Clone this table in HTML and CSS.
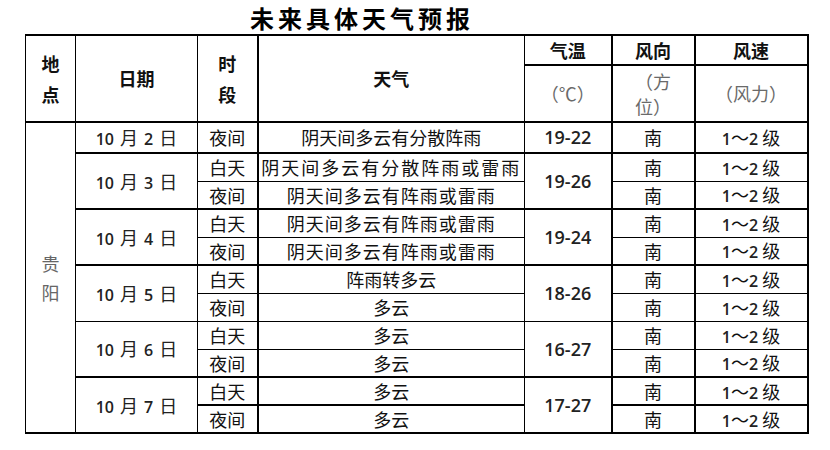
FILE: index.html
```html
<!DOCTYPE html>
<html lang="zh-CN">
<head>
<meta charset="utf-8">
<title>未来具体天气预报</title>
<link rel="stylesheet" href="styles.css">
</head>
<body>
<div class="page">
  <h1 class="title">未来具体天气预报</h1>
  <table class="forecast">
    <colgroup>
      <col class="w-loc"><col class="w-date"><col class="w-slot"><col class="w-wx"><col class="w-temp"><col class="w-dir"><col class="w-spd">
    </colgroup>
    <thead>
      <tr class="h1">
        <th rowspan="2">地<br>点</th>
        <th rowspan="2">日期</th>
        <th rowspan="2">时<br>段</th>
        <th rowspan="2" class="wx">天气</th>
        <th>气温</th>
        <th class="dir">风向</th>
        <th>风速</th>
      </tr>
      <tr class="h2">
        <td class="unit">（℃）</td>
        <td class="unit dir"><span class="unit-line">（方</span><span class="unit-line">位）</span></td>
        <td class="unit">（风力）</td>
      </tr>
    </thead>
    <tbody>
      <tr class="r-first tt">
        <td rowspan="12" class="loc"><span class="loc-ch">贵</span><span class="loc-ch">阳</span></td>
        <td class="date"><span class="num">10</span> 月 <span class="num">2</span> 日</td>
        <td class="slot">夜间</td>
        <td class="wx">阴天间多云有分散阵雨</td>
        <td class="temp">19-22</td>
        <td class="dir">南</td>
        <td class="spd"><span class="num">1</span>～<span class="num">2</span> 级</td>
      </tr>
      <tr class="tt">
        <td rowspan="2" class="date"><span class="num">10</span> 月 <span class="num">3</span> 日</td>
        <td class="slot">白天</td>
        <td class="wx sp2">阴天间多云有分散阵雨或雷雨</td>
        <td rowspan="2" class="temp">19-26</td>
        <td class="dir">南</td>
        <td class="spd"><span class="num">1</span>～<span class="num">2</span> 级</td>
      </tr>
      <tr>
        <td class="slot">夜间</td>
        <td class="wx sp1">阴天间多云有阵雨或雷雨</td>
        <td class="dir">南</td>
        <td class="spd"><span class="num">1</span>～<span class="num">2</span> 级</td>
      </tr>
      <tr class="tt">
        <td rowspan="2" class="date"><span class="num">10</span> 月 <span class="num">4</span> 日</td>
        <td class="slot">白天</td>
        <td class="wx sp1">阴天间多云有阵雨或雷雨</td>
        <td rowspan="2" class="temp">19-24</td>
        <td class="dir">南</td>
        <td class="spd"><span class="num">1</span>～<span class="num">2</span> 级</td>
      </tr>
      <tr>
        <td class="slot">夜间</td>
        <td class="wx sp1">阴天间多云有阵雨或雷雨</td>
        <td class="dir">南</td>
        <td class="spd"><span class="num">1</span>～<span class="num">2</span> 级</td>
      </tr>
      <tr class="tt">
        <td rowspan="2" class="date"><span class="num">10</span> 月 <span class="num">5</span> 日</td>
        <td class="slot">白天</td>
        <td class="wx">阵雨转多云</td>
        <td rowspan="2" class="temp">18-26</td>
        <td class="dir">南</td>
        <td class="spd"><span class="num">1</span>～<span class="num">2</span> 级</td>
      </tr>
      <tr>
        <td class="slot">夜间</td>
        <td class="wx">多云</td>
        <td class="dir">南</td>
        <td class="spd"><span class="num">1</span>～<span class="num">2</span> 级</td>
      </tr>
      <tr>
        <td rowspan="2" class="date"><span class="num">10</span> 月 <span class="num">6</span> 日</td>
        <td class="slot">白天</td>
        <td class="wx">多云</td>
        <td rowspan="2" class="temp">16-27</td>
        <td class="dir">南</td>
        <td class="spd"><span class="num">1</span>～<span class="num">2</span> 级</td>
      </tr>
      <tr>
        <td class="slot">夜间</td>
        <td class="wx">多云</td>
        <td class="dir">南</td>
        <td class="spd"><span class="num">1</span>～<span class="num">2</span> 级</td>
      </tr>
      <tr class="tt">
        <td rowspan="2" class="date"><span class="num">10</span> 月 <span class="num">7</span> 日</td>
        <td class="slot">白天</td>
        <td class="wx">多云</td>
        <td rowspan="2" class="temp">17-27</td>
        <td class="dir">南</td>
        <td class="spd"><span class="num">1</span>～<span class="num">2</span> 级</td>
      </tr>
      <tr class="tt">
        <td class="slot">夜间</td>
        <td class="wx">多云</td>
        <td class="dir">南</td>
        <td class="spd"><span class="num">1</span>～<span class="num">2</span> 级</td>
      </tr>
    </tbody>
  </table>
</div>
</body>
</html>
```

FILE: styles.css
```css
html, body {
  margin: 0;
  padding: 0;
  background: #ffffff;
}

body {
  font-family: "Noto Sans CJK SC", "Noto Sans", sans-serif;
  color: #111111;
}

.page {
  padding-left: 25px;
}

.title {
  margin: 0;
  height: 34px;
  line-height: 35px;
  padding-left: 225px;
  font-size: 24px;
  font-weight: 700;
  letter-spacing: 4px;
  color: #000000;
}

.forecast {
  border-collapse: collapse;
  table-layout: fixed;
  width: 783px;
  border-top: 2px solid #000;
  border-right: 2px solid #000;
  border-bottom: 2px solid #000;
  border-left: 1px solid #000;
}

.w-loc { width: 50px; }
.w-date { width: 122px; }
.w-slot { width: 60px; }
.w-wx { width: 267px; }
.w-temp { width: 87px; }
.w-dir { width: 83px; }
.w-spd { width: 113px; }

.forecast th,
.forecast td {
  border: 1px solid #000;
  padding: 0;
  text-align: center;
  vertical-align: middle;
  line-height: 1.25;
}

.forecast th {
  font-size: 18px;
  font-weight: 700;
  color: #111;
}

.h1 { height: 30px; }
.h2 { height: 57px; }

.h2 td {
  border-top: 2px solid #000;
}

.forecast th[rowspan] {
  line-height: 31px;
}

.unit {
  font-size: 16px;
  color: #6a6a6a;
  line-height: 24px;
}

.unit-line {
  display: block;
  line-height: 25px;
}

.forecast tbody tr { height: 28px; }
.forecast tbody tr.r-first { height: 31px; }

.forecast tr.tt td {
  border-top: 2px solid #000;
}

.forecast .wx {
  border-left: 2px solid #000;
}

.forecast .dir {
  border-left: 2px solid #000;
  border-right: 2px solid #000;
}

.forecast td {
  font-size: 18px;
}

.loc {
  font-size: 17px;
  color: #666;
}

.loc-ch {
  display: block;
  line-height: 25px;
  margin: 4px 0;
}

.date {
  font-size: 17px;
  color: #222;
  word-spacing: 2px;
}

.num {
  font-family: "Open Sans", "Liberation Sans", sans-serif;
  font-weight: 600;
  font-size: 16px;
  color: #222;
}

.slot {
  font-size: 17px;
}

.sp1 { letter-spacing: 1px; }
.sp2 { letter-spacing: 2px; }

.temp {
  font-family: "Open Sans", "Liberation Sans", sans-serif;
  font-weight: 600;
  font-size: 15px;
  color: #222;
}

.spd {
  font-size: 17px;
}
```
